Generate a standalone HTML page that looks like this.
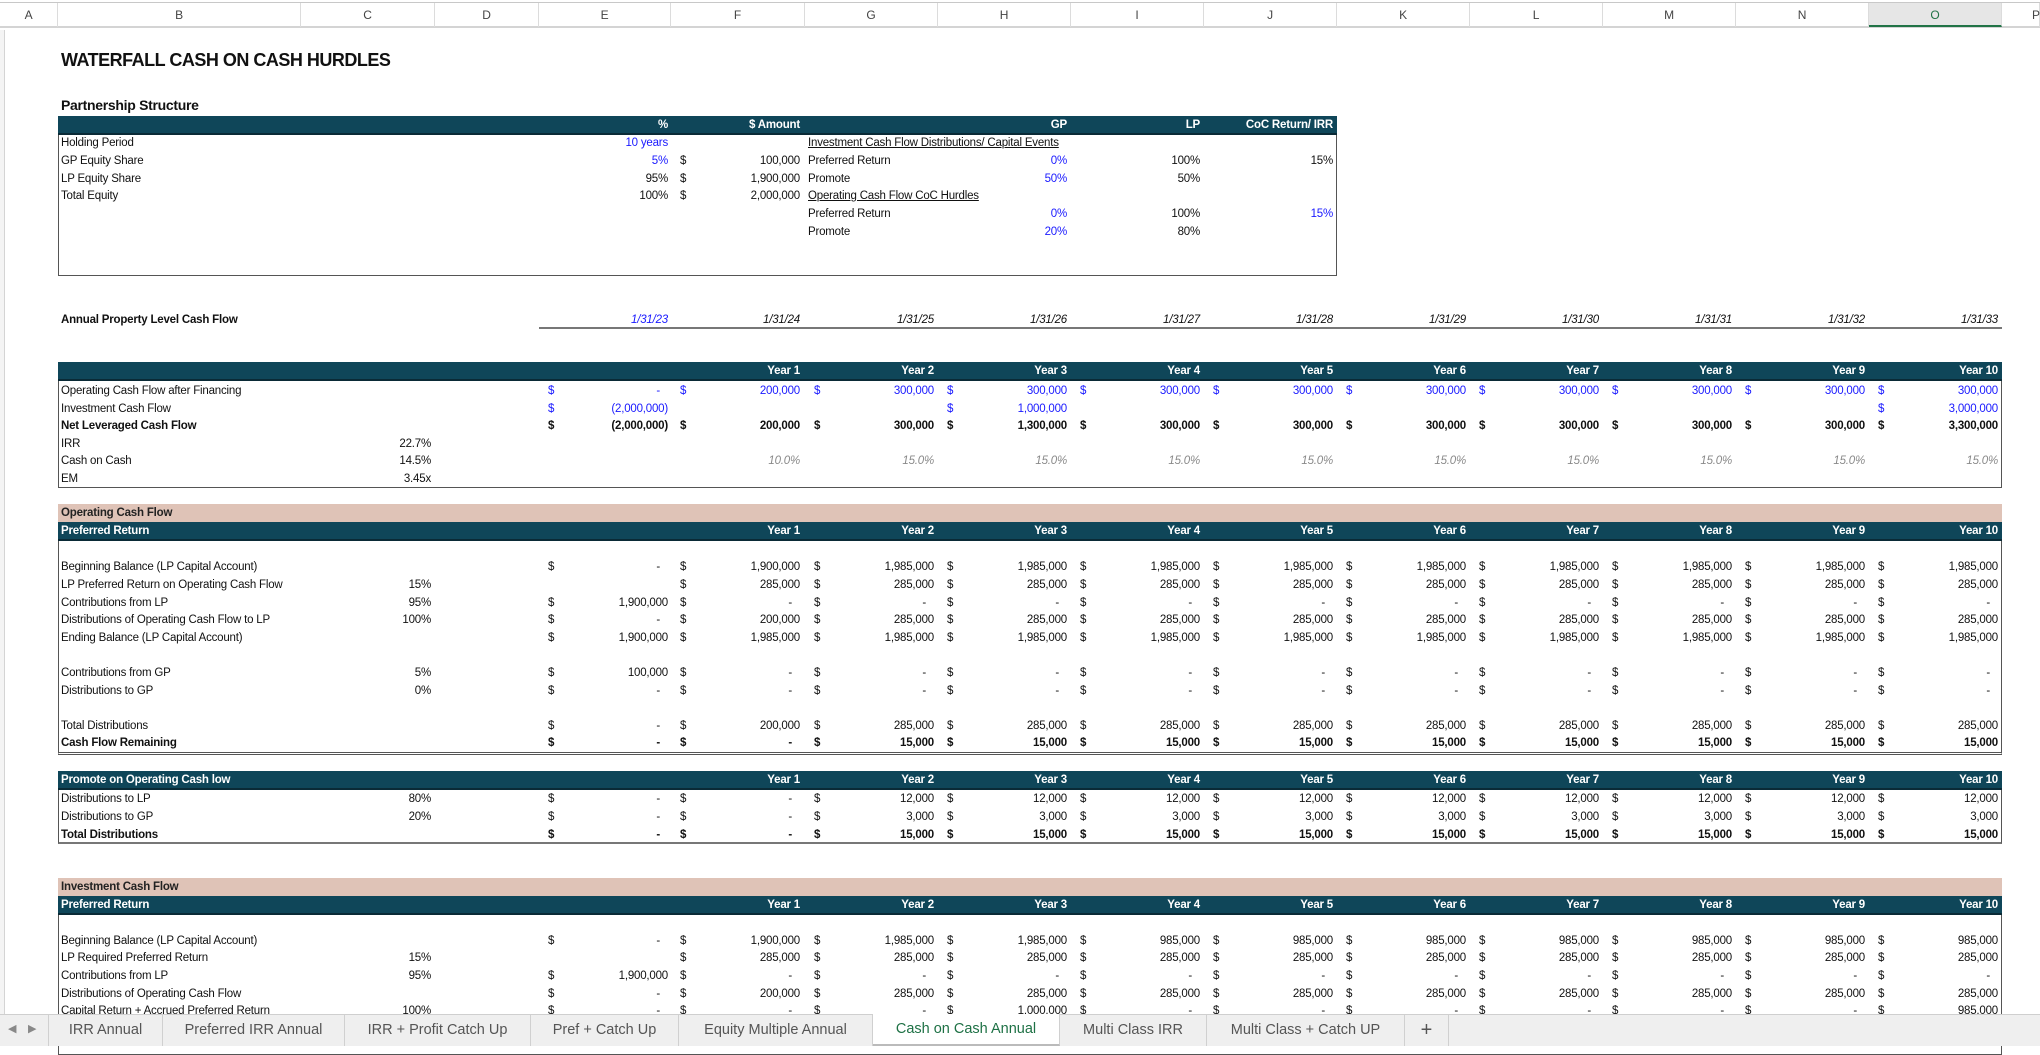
<!DOCTYPE html>
<html><head><meta charset="utf-8"><style>
*{margin:0;padding:0;box-sizing:border-box}
body{width:2040px;height:1046px;overflow:hidden;background:#fff;font-family:"Liberation Sans",Arial,sans-serif;font-size:11.5px;color:#111;position:relative;letter-spacing:-0.2px}
.abs{position:absolute}
.colhdr{position:absolute;top:2px;left:0;width:2040px;height:26px;border-top:1px solid #c8c8c8;border-bottom:2px solid #d4d4d4;background:#fff}
.colhdr span{position:absolute;top:0;height:24px;line-height:24px;text-align:center;color:#444;font-size:12px;border-right:1px solid #dcdcdc}
.row{position:absolute;left:0;width:2040px;height:18px;line-height:18px}
.l{position:absolute;left:61px;white-space:nowrap}
.cv{position:absolute;left:301px;width:130px;text-align:right}
.c{position:absolute;width:133px;text-align:right;padding-right:4px;white-space:nowrap}
.c em{position:absolute;left:9px;font-style:normal}
.d{padding-right:12px}
.cE{left:539px}.cF{left:671px}.cG{left:805px}.cH{left:938px}.cI{left:1071px}.cJ{left:1204px}.cK{left:1337px}.cL{left:1470px}.cM{left:1603px}.cN{left:1736px}.cO{left:1869px}
.blue{color:#1a1aff}
.b{font-weight:bold}
.gi{color:#8a8a8a;font-style:italic}
.bar{position:absolute;left:58px;width:1944px;height:19px;line-height:18px;background:#0f4659;color:#fff;font-weight:bold;border-bottom:2px solid #0a2a36}
.pink{position:absolute;left:58px;width:1944px;height:18px;line-height:18px;background:#dfc3b7;font-weight:bold;color:#222}
.box{position:absolute;border:1px solid #555;border-top:none}
.u{text-decoration:underline}
.tabs{position:absolute;left:0;top:1014px;width:2040px;height:32px;background:#efefef;border-top:1px solid #cfcfcf}
.tab{position:absolute;top:0;height:31px;line-height:30px;font-size:14.5px;color:#555;text-align:center;letter-spacing:0;border-right:1px solid #d0d0d0}
</style></head><body>

<div class="colhdr">
<span style="left:0;width:58px">A</span>
<span style="left:58px;width:243px">B</span>
<span style="left:301px;width:134px">C</span>
<span style="left:435px;width:104px">D</span>
<span style="left:539px;width:132px">E</span>
<span style="left:671px;width:134px">F</span>
<span style="left:805px;width:133px">G</span>
<span style="left:938px;width:133px">H</span>
<span style="left:1071px;width:133px">I</span>
<span style="left:1204px;width:133px">J</span>
<span style="left:1337px;width:133px">K</span>
<span style="left:1470px;width:133px">L</span>
<span style="left:1603px;width:133px">M</span>
<span style="left:1736px;width:133px">N</span>
<span style="left:1869px;width:133px;background:#e6e6e6;border-bottom:2px solid #217346;color:#217346">O</span>
<span style="left:2002px;width:38px;text-align:left;padding-left:30px">P</span>
</div>
<div class="abs" style="left:0;top:30px;width:5px;height:984px;border-right:1px solid #d4d4d4;background:#f4f4f4"></div>

<div class="abs b" style="left:61px;top:50px;font-size:18px;letter-spacing:-0.5px">WATERFALL CASH ON CASH HURDLES</div>
<div class="abs b" style="left:61px;top:97px;font-size:14px;letter-spacing:-0.3px">Partnership Structure</div>

<div class="bar" style="top:116px;width:1279px"></div>
<div class="row b" style="top:116px;color:#fff"><span class="c cE">%</span><span class="c cF">$ Amount</span><span class="c cH">GP</span><span class="c cI">LP</span><span class="c cJ">CoC Return/ IRR</span></div>
<div class="box" style="left:58px;top:135px;width:1279px;height:141px"></div>
<div class="row" style="top:134px"><span class="l">Holding Period</span><span class="c cE blue">10 years</span><span class="l u" style="left:808px">Investment Cash Flow Distributions/ Capital Events</span></div>
<div class="row" style="top:152px"><span class="l">GP Equity Share</span><span class="c cE blue">5%</span><span class="c cF"><em>$</em>100,000</span><span class="l" style="left:808px">Preferred Return</span><span class="c cH blue">0%</span><span class="c cI">100%</span><span class="c cJ">15%</span></div>
<div class="row" style="top:170px"><span class="l">LP Equity Share</span><span class="c cE">95%</span><span class="c cF"><em>$</em>1,900,000</span><span class="l" style="left:808px">Promote</span><span class="c cH blue">50%</span><span class="c cI">50%</span></div>
<div class="row" style="top:187px"><span class="l">Total Equity</span><span class="c cE">100%</span><span class="c cF"><em>$</em>2,000,000</span><span class="l u" style="left:808px">Operating Cash Flow CoC Hurdles</span></div>
<div class="row" style="top:205px"><span class="l" style="left:808px">Preferred Return</span><span class="c cH blue">0%</span><span class="c cI">100%</span><span class="c cJ blue">15%</span></div>
<div class="row" style="top:223px"><span class="l" style="left:808px">Promote</span><span class="c cH blue">20%</span><span class="c cI">80%</span></div>

<div class="row b" style="top:311px"><span class="l">Annual Property Level Cash Flow</span></div>
<div class="row" style="top:311px;font-style:italic"><span class="c cE blue">1/31/23</span><span class="c cF">1/31/24</span><span class="c cG">1/31/25</span><span class="c cH">1/31/26</span><span class="c cI">1/31/27</span><span class="c cJ">1/31/28</span><span class="c cK">1/31/29</span><span class="c cL">1/31/30</span><span class="c cM">1/31/31</span><span class="c cN">1/31/32</span><span class="c cO">1/31/33</span></div>
<div class="abs" style="left:539px;top:327px;width:1463px;height:2px;background:#777"></div>

<div class="bar" style="top:362px"></div>
<div class="row b" style="top:362px;color:#fff"><span class="c cF">Year 1</span><span class="c cG">Year 2</span><span class="c cH">Year 3</span><span class="c cI">Year 4</span><span class="c cJ">Year 5</span><span class="c cK">Year 6</span><span class="c cL">Year 7</span><span class="c cM">Year 8</span><span class="c cN">Year 9</span><span class="c cO">Year 10</span></div>
<div class="box" style="left:58px;top:381px;width:1944px;height:107px"></div>
<div class="row" style="top:382px"><span class="l">Operating Cash Flow after Financing</span><span class="blue"><span class="c cE d"><em>$</em>-</span><span class="c cF"><em>$</em>200,000</span><span class="c cG"><em>$</em>300,000</span><span class="c cH"><em>$</em>300,000</span><span class="c cI"><em>$</em>300,000</span><span class="c cJ"><em>$</em>300,000</span><span class="c cK"><em>$</em>300,000</span><span class="c cL"><em>$</em>300,000</span><span class="c cM"><em>$</em>300,000</span><span class="c cN"><em>$</em>300,000</span><span class="c cO"><em>$</em>300,000</span></span></div>
<div class="row" style="top:400px"><span class="l">Investment Cash Flow</span><span class="blue"><span class="c cE"><em>$</em>(2,000,000)</span><span class="c cH"><em>$</em>1,000,000</span><span class="c cO"><em>$</em>3,000,000</span></span></div>
<div class="row b" style="top:417px"><span class="l">Net Leveraged Cash Flow</span><span class="c cE"><em>$</em>(2,000,000)</span><span class="c cF"><em>$</em>200,000</span><span class="c cG"><em>$</em>300,000</span><span class="c cH"><em>$</em>1,300,000</span><span class="c cI"><em>$</em>300,000</span><span class="c cJ"><em>$</em>300,000</span><span class="c cK"><em>$</em>300,000</span><span class="c cL"><em>$</em>300,000</span><span class="c cM"><em>$</em>300,000</span><span class="c cN"><em>$</em>300,000</span><span class="c cO"><em>$</em>3,300,000</span></div>
<div class="row" style="top:435px"><span class="l">IRR</span><span class="cv">22.7%</span></div>
<div class="row" style="top:452px"><span class="l">Cash on Cash</span><span class="cv">14.5%</span><span class="gi"><span class="c cF">10.0%</span><span class="c cG">15.0%</span><span class="c cH">15.0%</span><span class="c cI">15.0%</span><span class="c cJ">15.0%</span><span class="c cK">15.0%</span><span class="c cL">15.0%</span><span class="c cM">15.0%</span><span class="c cN">15.0%</span><span class="c cO">15.0%</span></span></div>
<div class="row" style="top:470px"><span class="l">EM</span><span class="cv">3.45x</span></div>

<div class="pink" style="top:504px"><span style="padding-left:3px">Operating Cash Flow</span></div>
<div class="bar" style="top:522px"><span style="padding-left:3px">Preferred Return</span></div>
<div class="row b" style="top:522px;color:#fff"><span class="c cF">Year 1</span><span class="c cG">Year 2</span><span class="c cH">Year 3</span><span class="c cI">Year 4</span><span class="c cJ">Year 5</span><span class="c cK">Year 6</span><span class="c cL">Year 7</span><span class="c cM">Year 8</span><span class="c cN">Year 9</span><span class="c cO">Year 10</span></div>
<div class="box" style="left:58px;top:541px;width:1944px;height:214px;border-bottom:3px double #555"></div>
<div class="row" style="top:558px"><span class="l">Beginning Balance (LP Capital Account)</span><span class="c cE d"><em>$</em>-</span><span class="c cF"><em>$</em>1,900,000</span><span class="c cG"><em>$</em>1,985,000</span><span class="c cH"><em>$</em>1,985,000</span><span class="c cI"><em>$</em>1,985,000</span><span class="c cJ"><em>$</em>1,985,000</span><span class="c cK"><em>$</em>1,985,000</span><span class="c cL"><em>$</em>1,985,000</span><span class="c cM"><em>$</em>1,985,000</span><span class="c cN"><em>$</em>1,985,000</span><span class="c cO"><em>$</em>1,985,000</span></div>
<div class="row" style="top:576px"><span class="l">LP Preferred Return on Operating Cash Flow</span><span class="cv">15%</span><span class="c cF"><em>$</em>285,000</span><span class="c cG"><em>$</em>285,000</span><span class="c cH"><em>$</em>285,000</span><span class="c cI"><em>$</em>285,000</span><span class="c cJ"><em>$</em>285,000</span><span class="c cK"><em>$</em>285,000</span><span class="c cL"><em>$</em>285,000</span><span class="c cM"><em>$</em>285,000</span><span class="c cN"><em>$</em>285,000</span><span class="c cO"><em>$</em>285,000</span></div>
<div class="row" style="top:594px"><span class="l">Contributions from LP</span><span class="cv">95%</span><span class="c cE"><em>$</em>1,900,000</span><span class="c cF d"><em>$</em>-</span><span class="c cG d"><em>$</em>-</span><span class="c cH d"><em>$</em>-</span><span class="c cI d"><em>$</em>-</span><span class="c cJ d"><em>$</em>-</span><span class="c cK d"><em>$</em>-</span><span class="c cL d"><em>$</em>-</span><span class="c cM d"><em>$</em>-</span><span class="c cN d"><em>$</em>-</span><span class="c cO d"><em>$</em>-</span></div>
<div class="row" style="top:611px"><span class="l">Distributions of Operating Cash Flow to LP</span><span class="cv">100%</span><span class="c cE d"><em>$</em>-</span><span class="c cF"><em>$</em>200,000</span><span class="c cG"><em>$</em>285,000</span><span class="c cH"><em>$</em>285,000</span><span class="c cI"><em>$</em>285,000</span><span class="c cJ"><em>$</em>285,000</span><span class="c cK"><em>$</em>285,000</span><span class="c cL"><em>$</em>285,000</span><span class="c cM"><em>$</em>285,000</span><span class="c cN"><em>$</em>285,000</span><span class="c cO"><em>$</em>285,000</span></div>
<div class="row" style="top:629px"><span class="l">Ending Balance (LP Capital Account)</span><span class="c cE"><em>$</em>1,900,000</span><span class="c cF"><em>$</em>1,985,000</span><span class="c cG"><em>$</em>1,985,000</span><span class="c cH"><em>$</em>1,985,000</span><span class="c cI"><em>$</em>1,985,000</span><span class="c cJ"><em>$</em>1,985,000</span><span class="c cK"><em>$</em>1,985,000</span><span class="c cL"><em>$</em>1,985,000</span><span class="c cM"><em>$</em>1,985,000</span><span class="c cN"><em>$</em>1,985,000</span><span class="c cO"><em>$</em>1,985,000</span></div>
<div class="row" style="top:664px"><span class="l">Contributions from GP</span><span class="cv">5%</span><span class="c cE"><em>$</em>100,000</span><span class="c cF d"><em>$</em>-</span><span class="c cG d"><em>$</em>-</span><span class="c cH d"><em>$</em>-</span><span class="c cI d"><em>$</em>-</span><span class="c cJ d"><em>$</em>-</span><span class="c cK d"><em>$</em>-</span><span class="c cL d"><em>$</em>-</span><span class="c cM d"><em>$</em>-</span><span class="c cN d"><em>$</em>-</span><span class="c cO d"><em>$</em>-</span></div>
<div class="row" style="top:682px"><span class="l">Distributions to GP</span><span class="cv">0%</span><span class="c cE d"><em>$</em>-</span><span class="c cF d"><em>$</em>-</span><span class="c cG d"><em>$</em>-</span><span class="c cH d"><em>$</em>-</span><span class="c cI d"><em>$</em>-</span><span class="c cJ d"><em>$</em>-</span><span class="c cK d"><em>$</em>-</span><span class="c cL d"><em>$</em>-</span><span class="c cM d"><em>$</em>-</span><span class="c cN d"><em>$</em>-</span><span class="c cO d"><em>$</em>-</span></div>
<div class="row" style="top:717px"><span class="l">Total Distributions</span><span class="c cE d"><em>$</em>-</span><span class="c cF"><em>$</em>200,000</span><span class="c cG"><em>$</em>285,000</span><span class="c cH"><em>$</em>285,000</span><span class="c cI"><em>$</em>285,000</span><span class="c cJ"><em>$</em>285,000</span><span class="c cK"><em>$</em>285,000</span><span class="c cL"><em>$</em>285,000</span><span class="c cM"><em>$</em>285,000</span><span class="c cN"><em>$</em>285,000</span><span class="c cO"><em>$</em>285,000</span></div>
<div class="row b" style="top:734px"><span class="l">Cash Flow Remaining</span><span class="c cE d"><em>$</em>-</span><span class="c cF d"><em>$</em>-</span><span class="c cG"><em>$</em>15,000</span><span class="c cH"><em>$</em>15,000</span><span class="c cI"><em>$</em>15,000</span><span class="c cJ"><em>$</em>15,000</span><span class="c cK"><em>$</em>15,000</span><span class="c cL"><em>$</em>15,000</span><span class="c cM"><em>$</em>15,000</span><span class="c cN"><em>$</em>15,000</span><span class="c cO"><em>$</em>15,000</span></div>

<div class="bar" style="top:771px"><span style="padding-left:3px">Promote on Operating Cash low</span></div>
<div class="row b" style="top:771px;color:#fff"><span class="c cF">Year 1</span><span class="c cG">Year 2</span><span class="c cH">Year 3</span><span class="c cI">Year 4</span><span class="c cJ">Year 5</span><span class="c cK">Year 6</span><span class="c cL">Year 7</span><span class="c cM">Year 8</span><span class="c cN">Year 9</span><span class="c cO">Year 10</span></div>
<div class="box" style="left:58px;top:790px;width:1944px;height:54px;border-bottom:2px solid #777"></div>
<div class="row" style="top:790px"><span class="l">Distributions to LP</span><span class="cv">80%</span><span class="c cE d"><em>$</em>-</span><span class="c cF d"><em>$</em>-</span><span class="c cG"><em>$</em>12,000</span><span class="c cH"><em>$</em>12,000</span><span class="c cI"><em>$</em>12,000</span><span class="c cJ"><em>$</em>12,000</span><span class="c cK"><em>$</em>12,000</span><span class="c cL"><em>$</em>12,000</span><span class="c cM"><em>$</em>12,000</span><span class="c cN"><em>$</em>12,000</span><span class="c cO"><em>$</em>12,000</span></div>
<div class="row" style="top:808px"><span class="l">Distributions to GP</span><span class="cv">20%</span><span class="c cE d"><em>$</em>-</span><span class="c cF d"><em>$</em>-</span><span class="c cG"><em>$</em>3,000</span><span class="c cH"><em>$</em>3,000</span><span class="c cI"><em>$</em>3,000</span><span class="c cJ"><em>$</em>3,000</span><span class="c cK"><em>$</em>3,000</span><span class="c cL"><em>$</em>3,000</span><span class="c cM"><em>$</em>3,000</span><span class="c cN"><em>$</em>3,000</span><span class="c cO"><em>$</em>3,000</span></div>
<div class="row b" style="top:826px"><span class="l">Total Distributions</span><span class="c cE d"><em>$</em>-</span><span class="c cF d"><em>$</em>-</span><span class="c cG"><em>$</em>15,000</span><span class="c cH"><em>$</em>15,000</span><span class="c cI"><em>$</em>15,000</span><span class="c cJ"><em>$</em>15,000</span><span class="c cK"><em>$</em>15,000</span><span class="c cL"><em>$</em>15,000</span><span class="c cM"><em>$</em>15,000</span><span class="c cN"><em>$</em>15,000</span><span class="c cO"><em>$</em>15,000</span></div>

<div class="pink" style="top:878px"><span style="padding-left:3px">Investment Cash Flow</span></div>
<div class="bar" style="top:896px"><span style="padding-left:3px">Preferred Return</span></div>
<div class="row b" style="top:896px;color:#fff"><span class="c cF">Year 1</span><span class="c cG">Year 2</span><span class="c cH">Year 3</span><span class="c cI">Year 4</span><span class="c cJ">Year 5</span><span class="c cK">Year 6</span><span class="c cL">Year 7</span><span class="c cM">Year 8</span><span class="c cN">Year 9</span><span class="c cO">Year 10</span></div>
<div class="box" style="left:58px;top:915px;width:1944px;height:140px"></div>
<div class="row" style="top:932px"><span class="l">Beginning Balance (LP Capital Account)</span><span class="c cE d"><em>$</em>-</span><span class="c cF"><em>$</em>1,900,000</span><span class="c cG"><em>$</em>1,985,000</span><span class="c cH"><em>$</em>1,985,000</span><span class="c cI"><em>$</em>985,000</span><span class="c cJ"><em>$</em>985,000</span><span class="c cK"><em>$</em>985,000</span><span class="c cL"><em>$</em>985,000</span><span class="c cM"><em>$</em>985,000</span><span class="c cN"><em>$</em>985,000</span><span class="c cO"><em>$</em>985,000</span></div>
<div class="row" style="top:949px"><span class="l">LP Required Preferred Return</span><span class="cv">15%</span><span class="c cF"><em>$</em>285,000</span><span class="c cG"><em>$</em>285,000</span><span class="c cH"><em>$</em>285,000</span><span class="c cI"><em>$</em>285,000</span><span class="c cJ"><em>$</em>285,000</span><span class="c cK"><em>$</em>285,000</span><span class="c cL"><em>$</em>285,000</span><span class="c cM"><em>$</em>285,000</span><span class="c cN"><em>$</em>285,000</span><span class="c cO"><em>$</em>285,000</span></div>
<div class="row" style="top:967px"><span class="l">Contributions from LP</span><span class="cv">95%</span><span class="c cE"><em>$</em>1,900,000</span><span class="c cF d"><em>$</em>-</span><span class="c cG d"><em>$</em>-</span><span class="c cH d"><em>$</em>-</span><span class="c cI d"><em>$</em>-</span><span class="c cJ d"><em>$</em>-</span><span class="c cK d"><em>$</em>-</span><span class="c cL d"><em>$</em>-</span><span class="c cM d"><em>$</em>-</span><span class="c cN d"><em>$</em>-</span><span class="c cO d"><em>$</em>-</span></div>
<div class="row" style="top:985px"><span class="l">Distributions of Operating Cash Flow</span><span class="c cE d"><em>$</em>-</span><span class="c cF"><em>$</em>200,000</span><span class="c cG"><em>$</em>285,000</span><span class="c cH"><em>$</em>285,000</span><span class="c cI"><em>$</em>285,000</span><span class="c cJ"><em>$</em>285,000</span><span class="c cK"><em>$</em>285,000</span><span class="c cL"><em>$</em>285,000</span><span class="c cM"><em>$</em>285,000</span><span class="c cN"><em>$</em>285,000</span><span class="c cO"><em>$</em>285,000</span></div>
<div class="row" style="top:1002px"><span class="l">Capital Return + Accrued Preferred Return</span><span class="cv">100%</span><span class="c cE d"><em>$</em>-</span><span class="c cF d"><em>$</em>-</span><span class="c cG d"><em>$</em>-</span><span class="c cH"><em>$</em>1,000,000</span><span class="c cI d"><em>$</em>-</span><span class="c cJ d"><em>$</em>-</span><span class="c cK d"><em>$</em>-</span><span class="c cL d"><em>$</em>-</span><span class="c cM d"><em>$</em>-</span><span class="c cN d"><em>$</em>-</span><span class="c cO"><em>$</em>985,000</span></div>

<div class="tabs">
<span class="abs" style="left:8px;top:7px;color:#888;font-size:11px">&#9664;</span>
<span class="abs" style="left:28px;top:7px;color:#888;font-size:11px">&#9654;</span>
<span class="tab" style="left:48px;width:115px;border-left:1px solid #d0d0d0">IRR Annual</span>
<span class="tab" style="left:163px;width:182px">Preferred IRR Annual</span>
<span class="tab" style="left:345px;width:186px">IRR + Profit Catch Up</span>
<span class="tab" style="left:531px;width:148px">Pref + Catch Up</span>
<span class="tab" style="left:679px;width:194px">Equity Multiple Annual</span>
<span class="tab" style="left:873px;width:187px;background:#fff;color:#1e7145;top:-1px;height:32px;border-bottom:2px solid #bbb">Cash on Cash Annual</span>
<span class="tab" style="left:1060px;width:147px">Multi Class IRR</span>
<span class="tab" style="left:1207px;width:198px">Multi Class + Catch UP</span>
<span class="tab" style="left:1405px;width:44px;font-size:20px;color:#555">+</span>
</div>
</body></html>
